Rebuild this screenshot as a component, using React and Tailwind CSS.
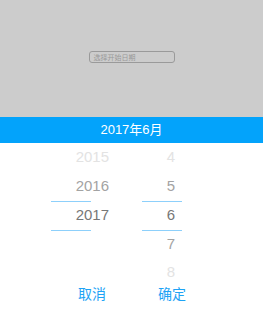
export default function App() {
    const years = [
        { v: '2015', c: 'text-[#e3e3e3]' },
        { v: '2016', c: 'text-[#a3a3a3]' },
        { v: '2017', c: 'text-[#777777]' },
        { v: '', c: '' },
        { v: '', c: '' },
    ];
    const months = [
        { v: '4', c: 'text-[#e3e3e3]' },
        { v: '5', c: 'text-[#a3a3a3]' },
        { v: '6', c: 'text-[#777777]' },
        { v: '7', c: 'text-[#a3a3a3]' },
        { v: '8', c: 'text-[#e3e3e3]' },
    ];

    return (
        <div className="w-[263px] h-[314px] bg-white flex flex-col overflow-hidden" style={{ fontFamily: '"Liberation Sans", "Noto Sans CJK SC", sans-serif' }}>
            {/* Overlay */}
            <div className="h-[117px] bg-[#cccccc] flex flex-col items-center pt-[51px] shrink-0">
                <div className="w-[86px] h-[12px] border border-[#9a9a9a] rounded-[3px] flex items-center pl-[4px] text-[7px] leading-none text-[#999999]">
                    选择开始日期
                </div>
            </div>

            {/* Header */}
            <div className="h-[26px] bg-[#03a3fb] flex items-center justify-center text-white text-[13px] shrink-0">
                2017年6月
            </div>

            {/* Picker */}
            <div className="relative flex h-[144px] shrink-0">
                <div className="absolute left-[51px] w-[40px] top-[58px] h-px bg-[#8dd0fb]" />
                <div className="absolute left-[51px] w-[40px] top-[87px] h-px bg-[#8dd0fb]" />
                <div className="absolute left-[142px] w-[40px] top-[58px] h-px bg-[#8dd0fb]" />
                <div className="absolute left-[142px] w-[40px] top-[87px] h-px bg-[#8dd0fb]" />

                <div className="w-[109px] flex flex-col items-end">
                    {years.map((y, i) => (
                        <div key={i} className={`h-[29px] flex items-center text-[15px] ${y.c}`}>{y.v}</div>
                    ))}
                </div>
                <div className="w-[66px] flex flex-col items-end">
                    {months.map((m, i) => (
                        <div key={i} className={`h-[29px] flex items-center text-[15px] ${m.c}`}>{m.v}</div>
                    ))}
                </div>
            </div>

            {/* Buttons */}
            <div className="flex text-[14px] text-[#1ea3f5] leading-none">
                <div className="ml-[78px]">取消</div>
                <div className="ml-[52px]">确定</div>
            </div>
        </div>
    );
}
